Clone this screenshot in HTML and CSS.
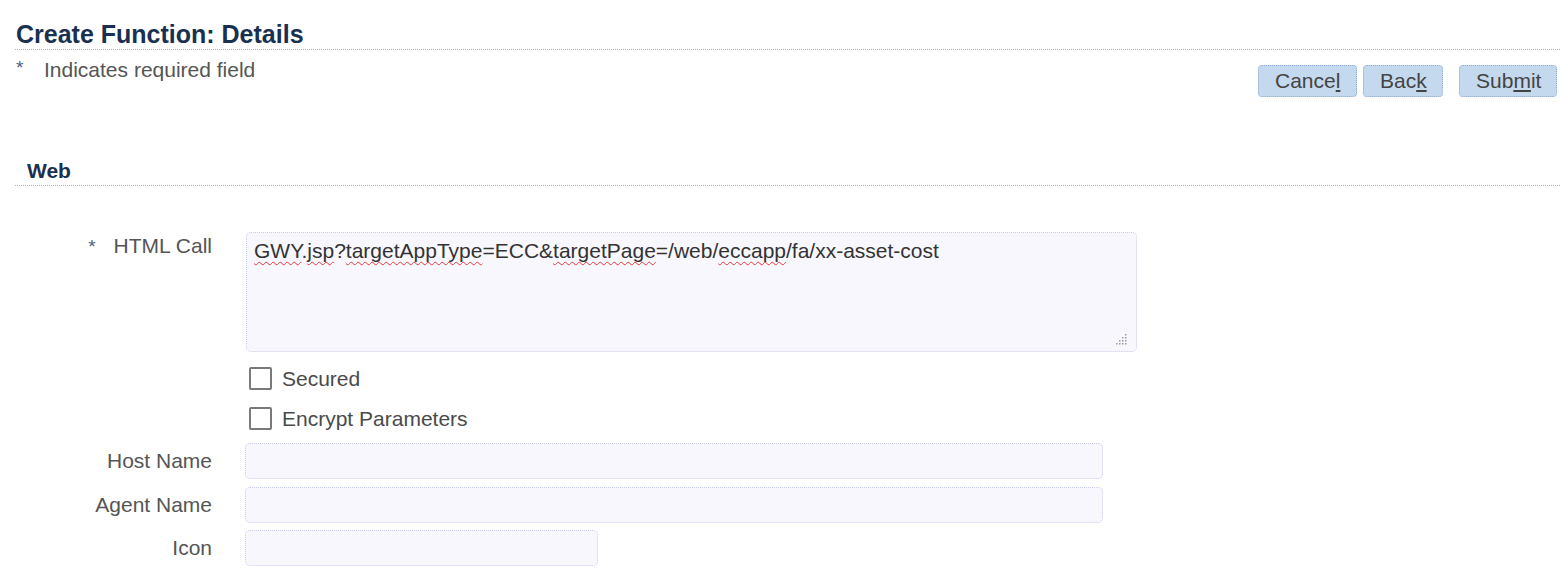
FILE: index.html
```html
<!DOCTYPE html>
<html lang="en">
<head>
<meta charset="utf-8">
<title>Create Function: Details</title>
<link rel="stylesheet" href="styles.css">
</head>
<body>
<div class="page">
  <h1 class="page-title">Create Function: Details</h1>

  <div class="top-row">
    <div class="req-note"><span class="req-star">*</span><span class="req-text">Indicates required field</span></div>
    <div class="actions">
      <button class="btn btn-cancel" type="button">Cance<u>l</u></button>
      <button class="btn btn-back" type="button">Bac<u>k</u></button>
      <button class="btn btn-submit" type="button">Sub<u>m</u>it</button>
    </div>
  </div>

  <h2 class="section-title">Web</h2>

  <div class="form">
    <div class="row row-top">
      <div class="label"><span class="label-star">*</span>HTML Call</div>
      <div class="textarea"><span class="sp">GWY</span>.<span class="sp">jsp</span>?<span class="sp">targetAppType</span>=ECC&amp;<span class="sp">targetPage</span>=/web/<span class="sp">eccapp</span>/fa/xx-asset-cost<svg class="grip" width="12" height="12" viewBox="0 0 12 12"><g fill="#9a9aa8"><rect x="9" y="1" width="1.5" height="1.5"/><rect x="6" y="4" width="1.5" height="1.5"/><rect x="9" y="4" width="1.5" height="1.5"/><rect x="3" y="7" width="1.5" height="1.5"/><rect x="6" y="7" width="1.5" height="1.5"/><rect x="9" y="7" width="1.5" height="1.5"/><rect x="0" y="10" width="1.5" height="1.5"/><rect x="3" y="10" width="1.5" height="1.5"/><rect x="6" y="10" width="1.5" height="1.5"/><rect x="9" y="10" width="1.5" height="1.5"/></g></svg></div>
    </div>
    <div class="row row-check row-check-1">
      <div class="label"></div>
      <label class="check"><span class="box"></span><span>Secured</span></label>
    </div>
    <div class="row row-check row-check-2">
      <div class="label"></div>
      <label class="check"><span class="box"></span><span>Encrypt Parameters</span></label>
    </div>
    <div class="row row-field row-host">
      <div class="label">Host Name</div>
      <div class="input input-wide"></div>
    </div>
    <div class="row row-field row-agent">
      <div class="label">Agent Name</div>
      <div class="input input-wide"></div>
    </div>
    <div class="row row-field row-icon">
      <div class="label">Icon</div>
      <div class="input input-short"></div>
    </div>
  </div>
</div>
</body>
</html>
```

FILE: styles.css
```css
* { box-sizing: border-box; }

html, body {
  margin: 0;
  padding: 0;
  background: #ffffff;
}

body {
  font-family: "Liberation Sans", Arial, sans-serif;
  font-size: 21px;
  line-height: 24px;
  color: #4a4a4a;
}

.page {
  padding: 0 4px 0 15px;
}

.page-title {
  margin: 20px 0 0 0;
  padding: 0 0 1px 1px;
  font-size: 25px;
  line-height: 28px;
  font-weight: bold;
  color: #1a3050;
  border-bottom: 1px dotted #9fb8d8;
}

.top-row {
  display: flex;
  justify-content: space-between;
  align-items: flex-start;
  padding-top: 8px;
}

.req-note {
  display: flex;
  align-items: flex-start;
  color: #555555;
}

.req-star {
  color: #4d6486;
  font-size: 19px;
  line-height: 20px;
  width: 29px;
  padding-left: 1px;
}

.actions {
  display: flex;
  margin-top: 7px;
  margin-right: 3px;
}

.btn {
  height: 32px;
  padding: 0 16px;
  font-family: "Liberation Sans", Arial, sans-serif;
  font-size: 21px;
  line-height: 30px;
  color: #444444;
  background: #c5d9ee;
  border: 1px dotted #8eaed4;
  border-radius: 4px;
}

.btn u {
  text-underline-offset: 2px;
}

.btn-cancel { width: 99px; }
.btn-back { width: 80px; margin-left: 6px; }
.btn-submit { width: 98px; margin-left: 16px; }

.section-title {
  margin: 62px 0 0 0;
  padding: 0 0 2px 12px;
  font-size: 21px;
  line-height: 24px;
  font-weight: bold;
  color: #1a3050;
  border-bottom: 1px dotted #9fb8d8;
}

.form {
  margin-top: 46px;
}

.row {
  display: grid;
  grid-template-columns: 197px 1fr;
  column-gap: 33px;
  align-items: center;
}

.row-top { align-items: start; }
.row-check-1 { margin-top: 10px; }
.row-check-2 { margin-top: 8px; }
.row-host { margin-top: 9px; }
.row-agent { margin-top: 8px; }
.row-icon { margin-top: 7px; }

.label {
  text-align: right;
  color: #555555;
  white-space: nowrap;
}

.row-top .label {
  padding-top: 2px;
}

.label-star {
  color: #4d6486;
  font-size: 19px;
  margin-right: 18px;
}

.textarea {
  position: relative;
  margin-left: 1px;
  width: 891px;
  height: 120px;
  padding: 6px 7px;
  color: #333333;
  background: #f7f7fd;
  border: 1px dotted #c9cdea;
  border-radius: 5px;
  white-space: nowrap;
}

.sp {
  text-decoration: underline wavy #e23a3a;
  text-decoration-thickness: 1px;
  text-decoration-skip-ink: none;
  text-underline-offset: 3px;
}

.grip {
  position: absolute;
  right: 8px;
  bottom: 6px;
}

.check {
  display: flex;
  align-items: center;
  height: 32px;
  padding-top: 2px;
  color: #4a4a4a;
}

.box {
  display: inline-block;
  width: 23px;
  height: 23px;
  margin-left: 4px;
  margin-right: 10px;
  margin-top: -2px;
  border: 2px solid #7a7a7a;
  border-radius: 2px;
  background: #ffffff;
}

.input {
  height: 36px;
  background: #f7f7fd;
  border: 1px dotted #c9cdea;
  border-radius: 5px;
}

.input-wide { width: 858px; }
.input-short { width: 353px; }
```
